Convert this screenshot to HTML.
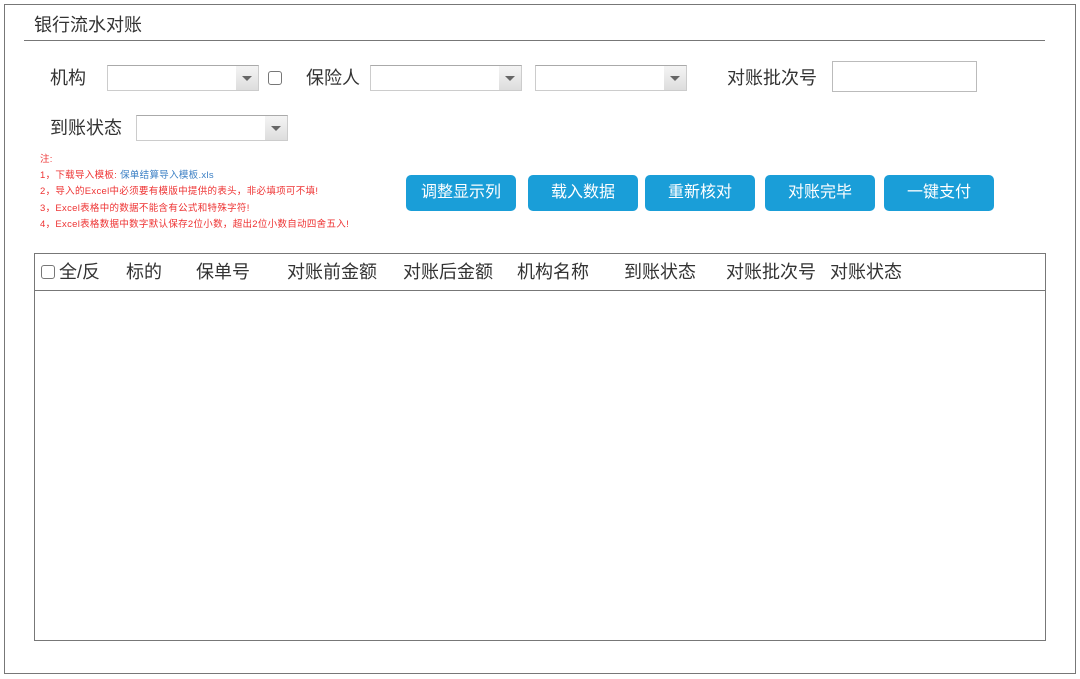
<!DOCTYPE html>
<html><head><meta charset="utf-8"><style>
*{margin:0;padding:0;box-sizing:border-box}
body{width:1080px;height:679px;background:#fff;position:relative;overflow:hidden;font-family:"Liberation Sans","Noto Sans CJK SC",sans-serif;color:#333}
.a{position:absolute}
.lbl{font-size:18px;color:#333;line-height:20px}
.sel{position:absolute;height:26px;border:1px solid #ccc;border-top-color:#aaa;background:#fff}
.sel .ar{position:absolute;right:0;top:0;bottom:0;width:22px;background:linear-gradient(#f4f4f4,#ddd)}
.sel .ar:after{content:"";position:absolute;left:6px;top:10px;border-left:5px solid transparent;border-right:5px solid transparent;border-top:5px solid #666}
.cb{position:absolute;width:14px;height:14px;border:1px solid #777;border-radius:3px;background:#fff}
.btn{position:absolute;top:175px;width:110px;height:36px;background:#1a9ed8;color:#fff;border-radius:5px;font-size:16px;line-height:36px;text-align:center}
.note{position:absolute;left:40px;font-size:9.5px;color:#e33;line-height:11px;white-space:nowrap;letter-spacing:0.3px}
.th{position:absolute;top:262px;font-size:18px;line-height:20px;color:#333}
</style></head><body>
<div class="a" style="left:4px;top:4px;width:1072px;height:670px;border:1px solid #777"></div>
<div class="a" style="left:34px;top:14px;font-size:18px;line-height:22px;color:#333">银行流水对账</div>
<div class="a" style="left:24px;top:40px;width:1021px;height:1px;background:#777"></div>

<div class="a lbl" style="left:50px;top:68px">机构</div>
<div class="sel" style="left:107px;top:65px;width:152px"><div class="ar"></div></div>
<div class="cb" style="left:268px;top:71px"></div>
<div class="a lbl" style="left:306px;top:68px">保险人</div>
<div class="sel" style="left:370px;top:65px;width:152px"><div class="ar"></div></div>
<div class="sel" style="left:535px;top:65px;width:152px"><div class="ar"></div></div>
<div class="a lbl" style="left:727px;top:68px">对账批次号</div>
<div class="a" style="left:832px;top:61px;width:145px;height:31px;border:1px solid #bbb"></div>

<div class="a lbl" style="left:50px;top:118px">到账状态</div>
<div class="sel" style="left:136px;top:115px;width:152px"><div class="ar"></div></div>

<div class="note" style="top:154px">注:</div>
<div class="note" style="top:170px">1，下载导入模板: <span style="color:#3b7fc4">保单结算导入模板.xls</span></div>
<div class="note" style="top:186px">2，导入的Excel中必须要有模版中提供的表头，非必填项可不填!</div>
<div class="note" style="top:203px">3，Excel表格中的数据不能含有公式和特殊字符!</div>
<div class="note" style="top:219px">4，Excel表格数据中数字默认保存2位小数，超出2位小数自动四舍五入!</div>

<div class="btn" style="left:406px">调整显示列</div>
<div class="btn" style="left:528px">载入数据</div>
<div class="btn" style="left:645px">重新核对</div>
<div class="btn" style="left:765px">对账完毕</div>
<div class="btn" style="left:884px">一键支付</div>

<div class="a" style="left:34px;top:253px;width:1012px;height:388px;border:1px solid #777"></div>
<div class="a" style="left:35px;top:290px;width:1010px;height:1px;background:#777"></div>
<div class="cb" style="left:41px;top:265px"></div>
<div class="th" style="left:59px">全/反</div>
<div class="th" style="left:126px">标的</div>
<div class="th" style="left:196px">保单号</div>
<div class="th" style="left:287px">对账前金额</div>
<div class="th" style="left:403px">对账后金额</div>
<div class="th" style="left:517px">机构名称</div>
<div class="th" style="left:624px">到账状态</div>
<div class="th" style="left:726px">对账批次号</div>
<div class="th" style="left:830px">对账状态</div>
</body></html>
